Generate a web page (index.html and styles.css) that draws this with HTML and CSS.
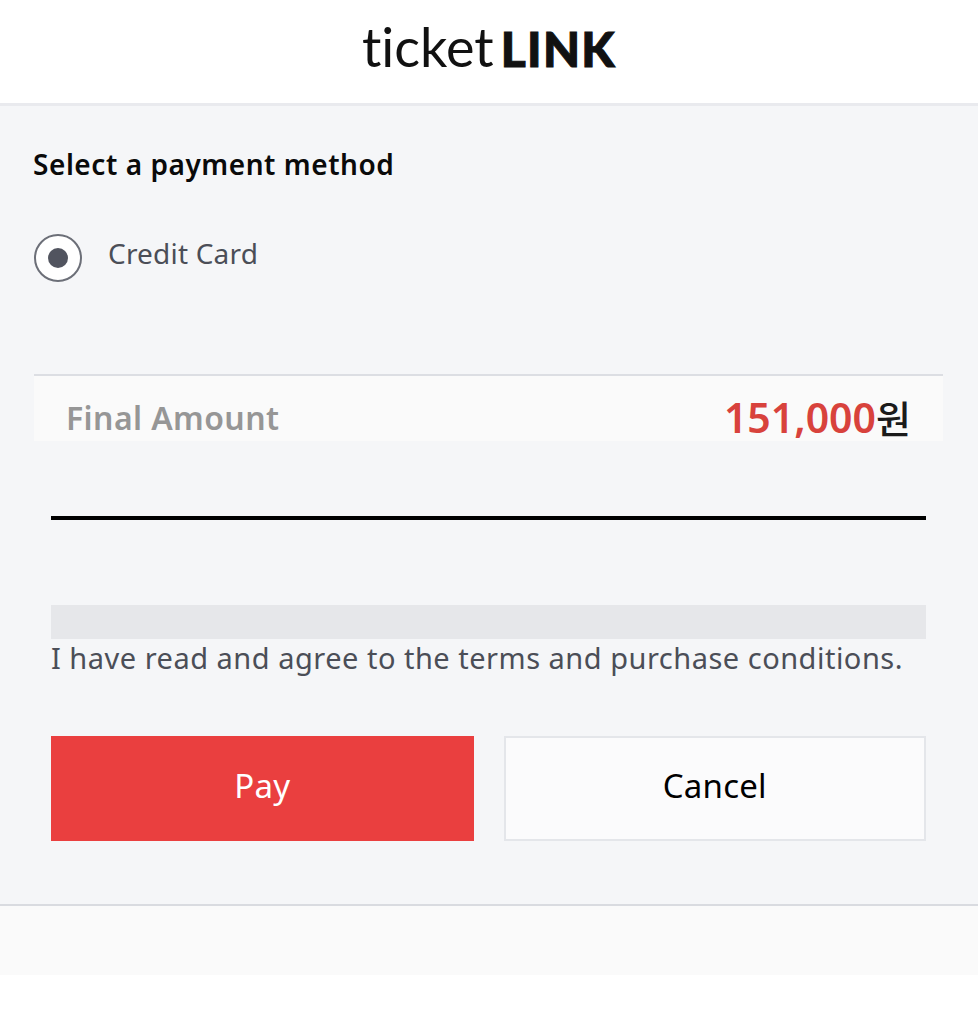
FILE: index.html
```html
<!DOCTYPE html>
<html lang="en">
<head>
    <meta charset="UTF-8">
    <meta name="viewport" content="width=device-width, initial-scale=1.0">
    <title>ticketLINK Payment</title>
    <link rel="stylesheet" href="styles.css">
</head>
<body>
    <header class="site-header">
        <div class="logo"><span class="logo-light">ticket</span><span class="logo-bold">LINK</span></div>
    </header>

    <main class="payment">
        <h2 class="section-title">Select a payment method</h2>

        <div class="method">
            <span class="radio"><span class="radio-dot"></span></span>
            <span class="method-label">Credit Card</span>
        </div>

        <div class="amount">
            <span class="amount-label">Final Amount</span>
            <span class="amount-value"><span class="amount-number">151,000</span>원</span>
        </div>

        <div class="agree">
            <div class="agree-rule"></div>
            <div class="agree-box"></div>
            <p class="agree-text">I have read and agree to the terms and purchase conditions.</p>
            <div class="buttons">
                <button type="button" class="btn btn-pay">Pay</button>
                <button type="button" class="btn btn-cancel">Cancel</button>
            </div>
        </div>
    </main>

    <footer class="site-footer"></footer>
</body>
</html>
```

FILE: styles.css
```css
body {
    font-family: "Noto Sans", "Noto Sans CJK KR", sans-serif;
    margin: 0;
    padding: 0;
    background-color: #ffffff;
}
.site-header {
    height: 103px;
    display: flex;
    justify-content: center;
    align-items: center;
    background-color: #ffffff;
    border-bottom: 3px solid #e9eaee;
}
.logo {
    font-family: Lato, sans-serif;
    line-height: 1;
    color: #111111;
    margin-top: -9px;
    font-variant-ligatures: none;
}
.logo-light {
    font-size: 54px;
    font-weight: 400;
    margin-right: 7px;
}
.logo-bold {
    font-size: 48px;
    font-weight: 900;
    letter-spacing: 1.3px;
    -webkit-text-stroke: 1px #111111;
}
.payment {
    height: 798px;
    padding: 0 35px 0 34px;
    background-color: #f5f6f8;
    border-bottom: 2px solid #d9dbe0;
    overflow: hidden;
}
.section-title {
    margin: 39px 0 0 -1px;
    font-size: 28px;
    line-height: 38px;
    font-weight: 600;
    letter-spacing: 0.55px;
    color: #0a0a0a;
}
.method {
    display: flex;
    align-items: flex-start;
    gap: 26px;
    margin-top: 51px;
}
.radio {
    width: 44px;
    height: 44px;
    border: 2px solid #6c6f78;
    border-radius: 50%;
    background-color: #ffffff;
    display: flex;
    justify-content: center;
    align-items: center;
}
.radio-dot {
    width: 20px;
    height: 20px;
    border-radius: 50%;
    background-color: #51545f;
}
.method-label {
    font-size: 28px;
    line-height: 38px;
    letter-spacing: 0.2px;
    color: #4b4e57;
}
.amount {
    display: flex;
    justify-content: space-between;
    align-items: center;
    box-sizing: border-box;
    height: 67px;
    margin-top: 92px;
    padding: 18px 32px 0 32px;
    background-color: #fafafa;
    border-top: 2px solid #dcdee3;
}
.amount-label {
    font-size: 32px;
    font-weight: 600;
    letter-spacing: 0.4px;
    color: #969696;
}
.amount-value {
    font-size: 38px;
    font-weight: 500;
    line-height: 50px;
    color: #1b1b1b;
}
.amount-number {
    font-size: 41px;
    font-weight: 600;
    color: #d8423c;
}
.agree {
    padding: 0 17px;
}
.agree-rule {
    height: 4px;
    margin-top: 75px;
    background-color: #000000;
}
.agree-box {
    height: 34px;
    margin-top: 85px;
    background-color: #e6e7ea;
}
.agree-text {
    margin: 0;
    font-size: 29px;
    line-height: 38px;
    letter-spacing: 0.5px;
    white-space: nowrap;
    color: #4b4e57;
}
.buttons {
    display: grid;
    grid-template-columns: 1fr 1fr;
    gap: 30px;
    margin-top: 59px;
}
.btn {
    height: 105px;
    padding: 0 0 6px;
    font-family: inherit;
    font-size: 33px;
    letter-spacing: 0.2px;
    border-radius: 0;
    box-sizing: border-box;
}
.btn-pay {
    color: #ffffff;
    background-color: #ea3f3f;
    border: none;
}
.btn-cancel {
    color: #000000;
    background-color: #fbfbfc;
    border: 2px solid #e4e6ea;
}
.site-footer {
    height: 69px;
    background-color: #fafafa;
}
```
